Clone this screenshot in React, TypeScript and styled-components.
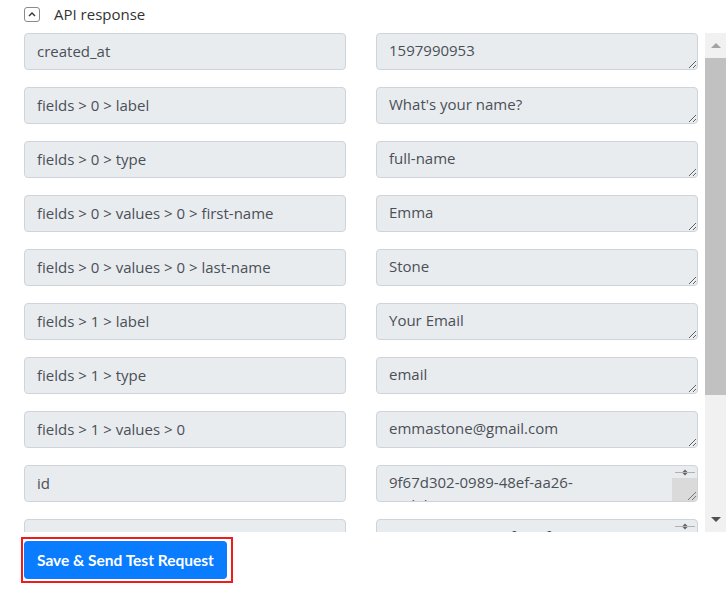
import styled, { createGlobalStyle } from "styled-components";
import { Fragment } from "react";

const GlobalStyle = createGlobalStyle`
  body {
    margin: 0;
    background: #ffffff;
    font-family: "Open Sans", "Noto Sans", sans-serif;
  }
`;

const Page = styled.div`
  width: 726px;
`;

const Header = styled.div`
  height: 28px;
  margin-bottom: 5px;
  display: flex;
  align-items: center;
  padding-left: 24px;
  gap: 14px;
  font-size: 15px;
  color: #333;
`;

const ToggleBox = styled.span`
  width: 14px;
  height: 13px;
  border: 1px solid #8a8a8a;
  border-radius: 3px;
  display: flex;
  align-items: center;
  justify-content: center;
`;

const Panel = styled.div`
  height: 499px;
  display: flex;
  gap: 7px;
`;

const List = styled.div`
  flex: 1;
  overflow: hidden;
  padding-left: 24px;
  display: grid;
  grid-template-columns: 322px 322px;
  grid-auto-rows: 37px;
  column-gap: 30px;
  row-gap: 17px;
`;

const fieldBase = `
  box-sizing: border-box;
  display: block;
  width: 322px;
  height: 37px;
  margin: 0;
  padding: 5px 12px 7px;
  font-family: "Open Sans", "Noto Sans", sans-serif;
  font-size: 15px;
  line-height: 1.5;
  color: #495057;
  background: #e9ecef;
  border: 1px solid #ced4da;
  border-radius: 4px;
  outline: none;
`;

const KeyInput = styled.input`
  ${fieldBase}
`;

const ValueArea = styled.textarea`
  ${fieldBase}
  resize: vertical;
  overflow: hidden;
`;

/* long values: a textarea with its own small scrollbar */
const ValueBox = styled.div`
  ${fieldBase}
  padding: 0;
  display: flex;
  overflow: hidden;
`;

const ValueText = styled.textarea`
  flex: 1;
  margin: 0;
  padding: 5px 0 7px 12px;
  border: none;
  background: transparent;
  resize: none;
  overflow: hidden;
  outline: none;
  font-family: "Open Sans", "Noto Sans", sans-serif;
  font-size: 15px;
  line-height: 1.5;
  color: #495057;
`;

const MiniScroll = styled.div`
  width: 25px;
  display: flex;
  flex-direction: column;
`;

const MiniButton = styled.div`
  height: 12px;
  display: flex;
  align-items: center;
  justify-content: center;
`;

const MiniThumb = styled.div`
  flex: 1;
  background: #dadada;
  display: flex;
  align-items: flex-end;
  justify-content: flex-end;
`;

const ScrollBar = styled.div`
  width: 21px;
  background: #f1f1f1;
  display: flex;
  flex-direction: column;
`;

const ArrowCell = styled.div`
  height: 25px;
  display: flex;
  align-items: center;
  justify-content: center;
`;

const Arrow = styled.span<{ $down?: boolean; $color: string }>`
  width: 0;
  height: 0;
  border-left: 5px solid transparent;
  border-right: 5px solid transparent;
  ${(p) =>
    p.$down
      ? `border-top: 5px solid ${p.$color};`
      : `border-bottom: 5px solid ${p.$color};`}
`;

const Thumb = styled.div`
  height: 337px;
  background: #c1c1c1;
`;

const Track = styled.div`
  flex: 1;
`;

const Footer = styled.div`
  padding: 5px 0 0 21px;
`;

const Highlight = styled.div`
  display: inline-block;
  border: 2px solid #ee1c1c;
  padding: 2px 4px 2px 1px;
`;

const SendButton = styled.button`
  display: block;
  height: 38px;
  padding: 0 13px;
  background: #0a7cff;
  color: #ffffff;
  border: none;
  border-radius: 4px;
  font-family: Lato, "Open Sans", sans-serif;
  font-weight: 700;
  font-size: 15.5px;
`;

const rows: [string, string, boolean?][] = [
  ["created_at", "1597990953"],
  ["fields > 0 > label", "What's your name?"],
  ["fields > 0 > type", "full-name"],
  ["fields > 0 > values > 0 > first-name", "Emma"],
  ["fields > 0 > values > 0 > last-name", "Stone"],
  ["fields > 1 > label", "Your Email"],
  ["fields > 1 > type", "email"],
  ["fields > 1 > values > 0", "emmastone@gmail.com"],
  ["id", "9f67d302-0989-48ef-aa26-a0d4b9174096", true],
  ["ref", "00052000-4001-4fae-8f44-5d3a71c0e2b1", true],
  ["submitted_at", "1597990955"],
  ["form_id", "8c6a29e1"],
];

function LongValue({ value }: { value: string }) {
  return (
    <ValueBox>
      <ValueText readOnly value={value} />
      <MiniScroll>
        <MiniButton>
          <svg width="22" height="9" viewBox="0 0 22 9">
            <path d="M1 4.5 H21" stroke="#b0b0b0" strokeWidth="1" />
            <path d="M8.5 4 L11 1.5 L13.5 4 Z M8.5 5 L11 7.5 L13.5 5 Z" fill="#666" />
          </svg>
        </MiniButton>
        <MiniThumb>
          <svg width="12" height="12" viewBox="0 0 12 12">
            <path d="M3 11 L11 3 M7 11 L11 7" stroke="#777" strokeWidth="1" />
          </svg>
        </MiniThumb>
      </MiniScroll>
    </ValueBox>
  );
}

function App() {
  return (
    <Page>
      <GlobalStyle />
      <Header>
        <ToggleBox>
          <svg width="8" height="6" viewBox="0 0 8 6">
            <path d="M1 5 L4 2 L7 5" fill="none" stroke="#333" strokeWidth="1.4" />
          </svg>
        </ToggleBox>
        API response
      </Header>
      <Panel>
        <List>
          {rows.map(([k, v, long]) => (
            <Fragment key={k}>
              <KeyInput readOnly value={k} />
              {long ? <LongValue value={v} /> : <ValueArea readOnly value={v} />}
            </Fragment>
          ))}
        </List>
        <ScrollBar>
          <ArrowCell>
            <Arrow $color="#a3a3a3" />
          </ArrowCell>
          <Thumb />
          <Track />
          <ArrowCell>
            <Arrow $down $color="#505050" />
          </ArrowCell>
        </ScrollBar>
      </Panel>
      <Footer>
        <Highlight>
          <SendButton>Save &amp; Send Test Request</SendButton>
        </Highlight>
      </Footer>
    </Page>
  );
}

export default App;
